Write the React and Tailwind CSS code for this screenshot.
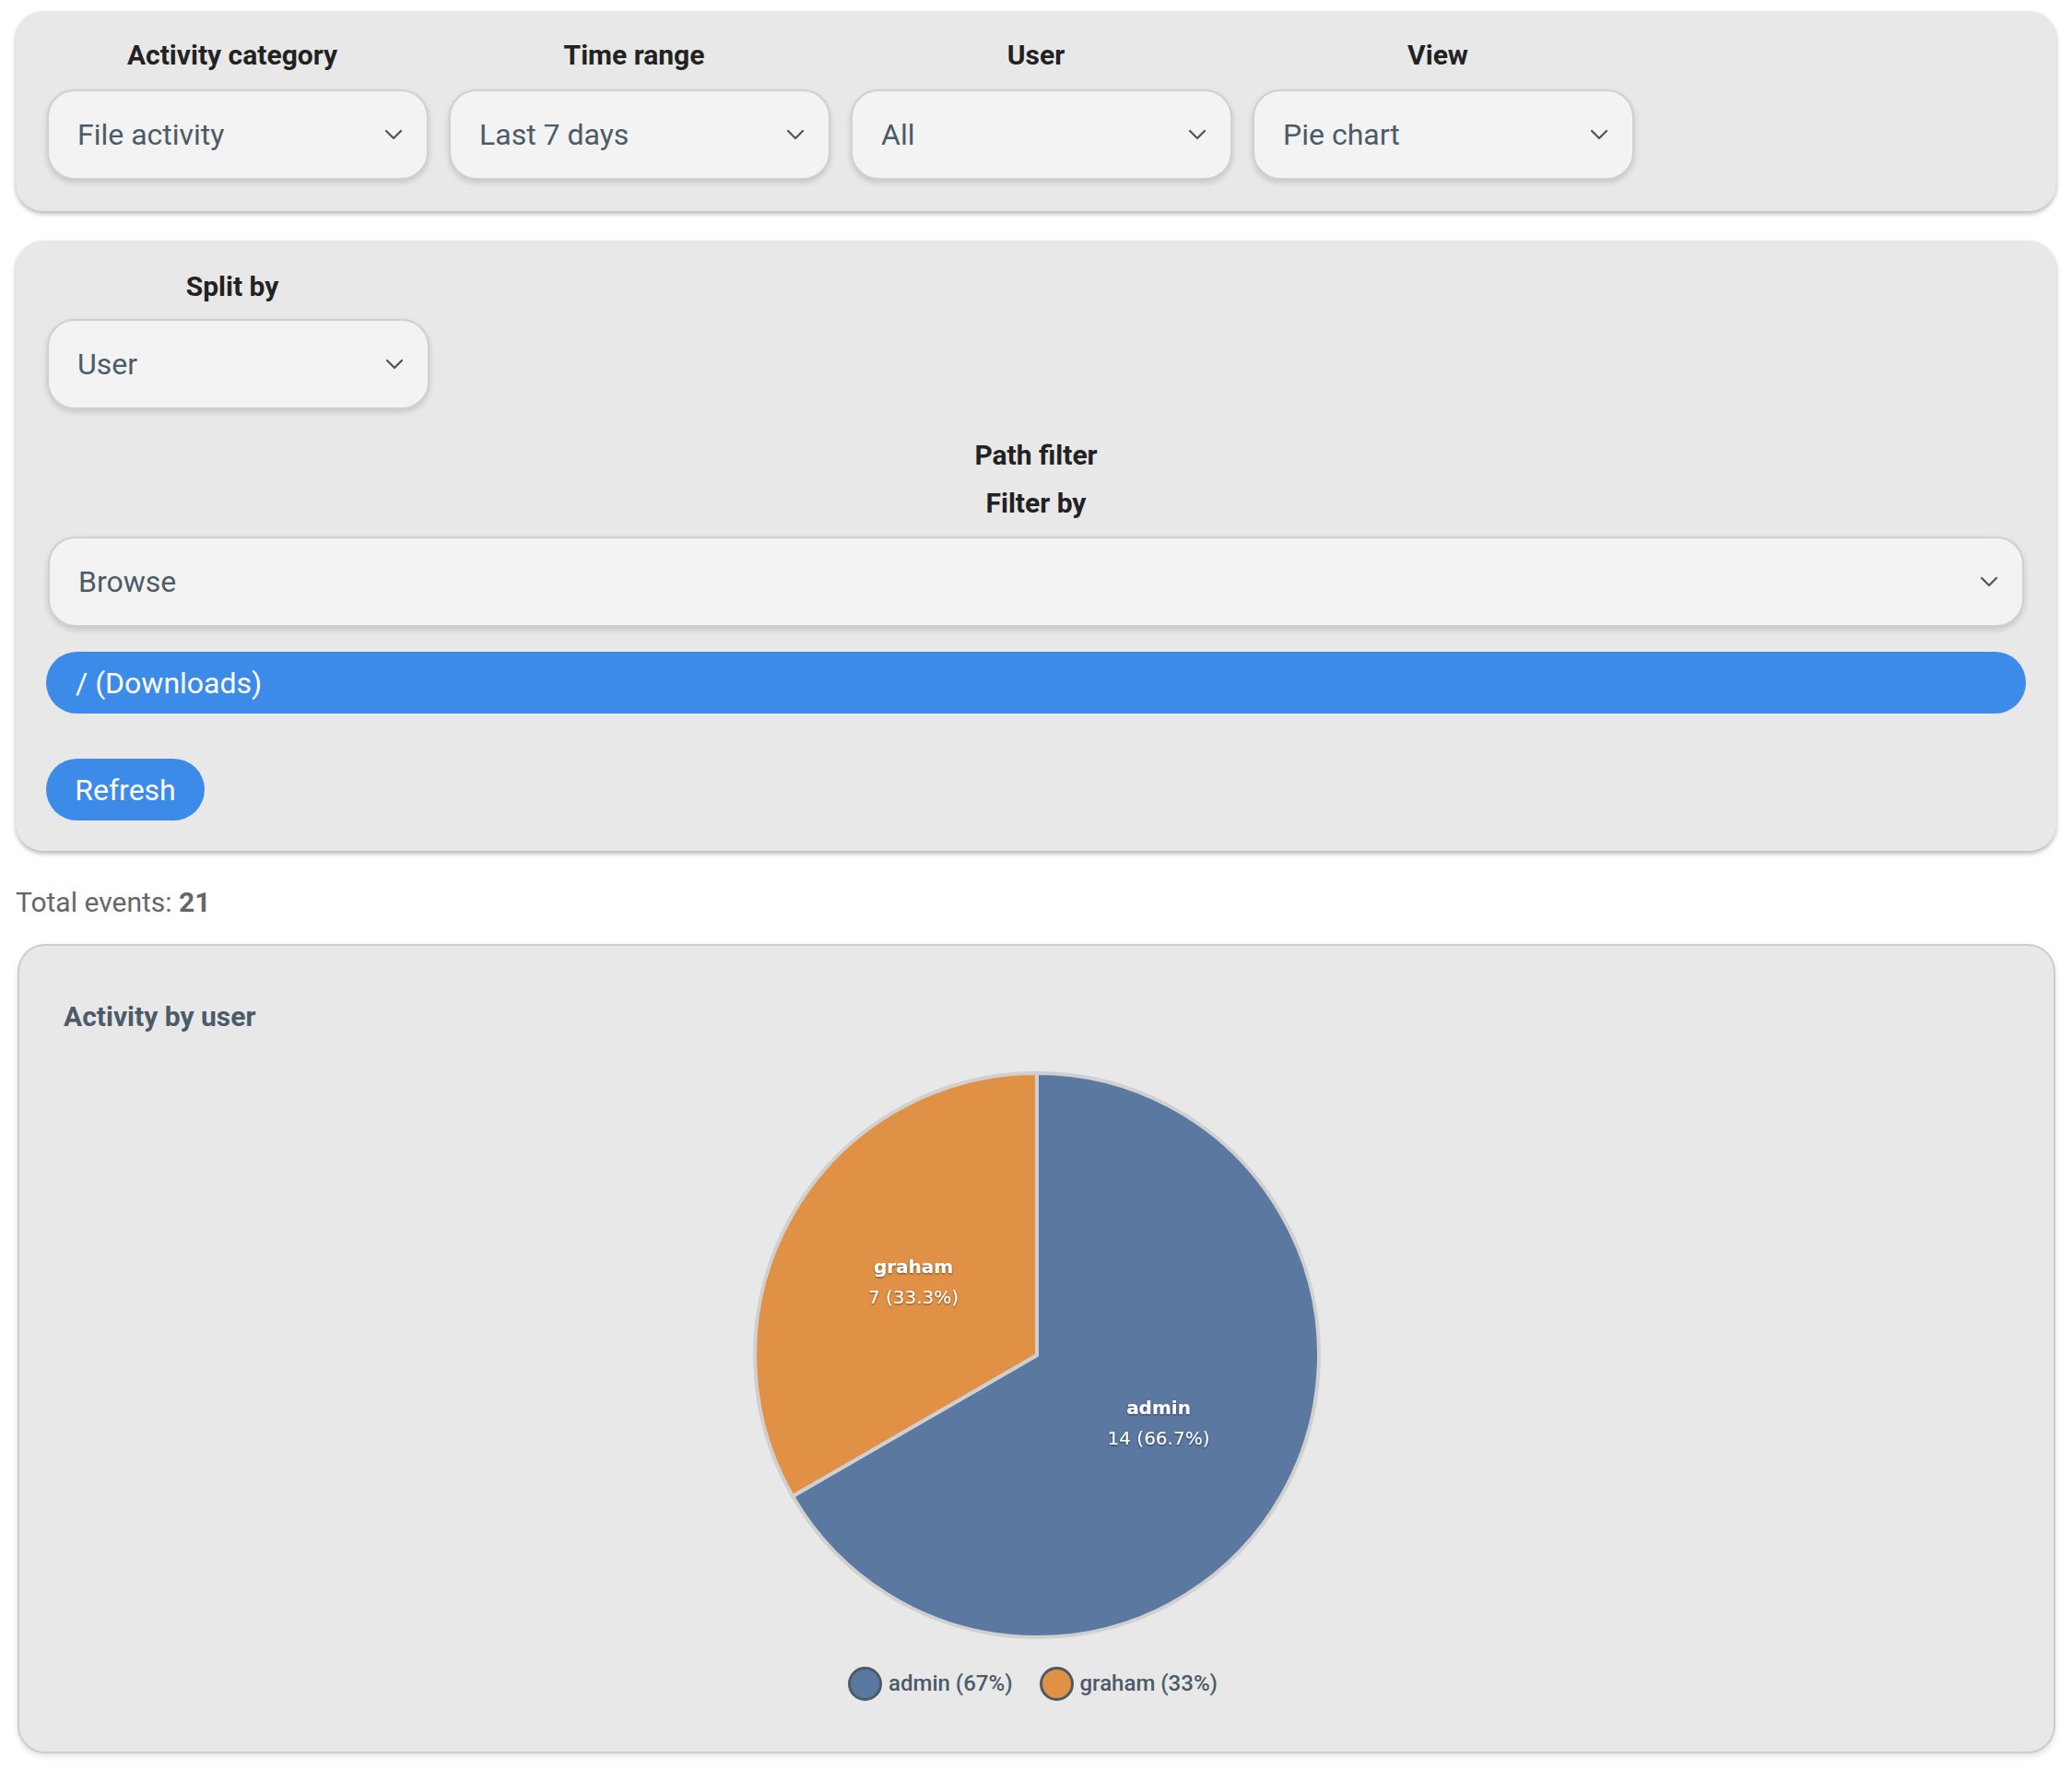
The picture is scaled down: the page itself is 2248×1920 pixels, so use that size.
import { ChevronDown } from "lucide-react";

const filters = [
  { label: "Activity category", value: "File activity" },
  { label: "Time range", value: "Last 7 days" },
  { label: "User", value: "All" },
  { label: "View", value: "Pie chart" },
];

const slices = [
  { name: "admin", count: 14, color: "#5b78a1" },
  { name: "graham", count: 7, color: "#e19146" },
];

function Select({ value, className = "" }) {
  return (
    <div
      className={
        "flex h-[98px] items-center justify-between rounded-[30px] border-2 border-[#d0d0d0] bg-[#f3f3f3] pl-[31px] pr-[20px] text-[32px] text-[#4b5b68] shadow-[0_3px_6px_rgba(0,0,0,0.15)] " +
        className
      }
    >
      <span>{value}</span>
      <ChevronDown size={32} strokeWidth={1.7} className="text-[#555]" />
    </div>
  );
}

function Label({ children, className = "pr-[12px]" }) {
  return (
    <div className={"text-center text-[30px] font-bold leading-[40px] text-[#222] " + className}>
      {children}
    </div>
  );
}

function PieChart() {
  const cx = 320;
  const cy = 320;
  const r = 306;
  const total = slices.reduce((s, x) => s + x.count, 0);
  const adminAngle = (slices[0].count / total) * Math.PI * 2;
  const ex = cx + r * Math.sin(adminAngle);
  const ey = cy - r * Math.cos(adminAngle);

  return (
    <svg width="640" height="640" viewBox="0 0 640 640">
      <defs>
        <filter id="ts" x="-20%" y="-50%" width="140%" height="200%">
          <feDropShadow dx="0" dy="1" stdDeviation="1.2" floodColor="#000" floodOpacity="0.55" />
        </filter>
      </defs>
      <path
        d={`M${cx} ${cy} L${cx} ${cy - r} A${r} ${r} 0 1 1 ${ex} ${ey} Z`}
        fill={slices[0].color}
        stroke="#d0d0d0"
        strokeWidth="4"
        strokeLinejoin="round"
      />
      <path
        d={`M${cx} ${cy} L${cx} ${cy - r} A${r} ${r} 0 0 0 ${ex} ${ey} Z`}
        fill={slices[1].color}
        stroke="#d0d0d0"
        strokeWidth="4"
        strokeLinejoin="round"
      />
      <g
        filter="url(#ts)"
        fill="#fff"
        textAnchor="middle"
        fontFamily="'DejaVu Sans', sans-serif"
        fontSize="20"
      >
        <text x="186" y="231" fontWeight="bold">graham</text>
        <text x="186" y="264">7 (33.3%)</text>
        <text x="452" y="384" fontWeight="bold">admin</text>
        <text x="452" y="417">14 (66.7%)</text>
      </g>
    </svg>
  );
}

export default function App() {
  return (
    <div className="min-h-[1920px] bg-white pt-[12px] font-['Roboto',sans-serif]">
      <div className="mx-[17px] flex gap-[22px] rounded-[30px] bg-[#e8e8e8] px-[34px] pb-[34px] pt-[28px] shadow-[0_3px_5px_rgba(0,0,0,0.28)]">
        {filters.map((f) => (
          <div key={f.label} className="flex w-[414px] flex-col gap-[17px]">
            <Label>{f.label}</Label>
            <Select value={f.value} />
          </div>
        ))}
      </div>

      <div className="mx-[17px] mt-[32px] flex flex-col rounded-[30px] bg-[#e8e8e8] px-[33px] pb-[33px] pt-[30px] shadow-[0_3px_5px_rgba(0,0,0,0.28)]">
        <div className="flex w-[416px] flex-col gap-[15px]">
          <Label>Split by</Label>
          <Select value="User" className="ml-[1px]" />
        </div>
        <div className="mt-[30px]">
          <Label className="">Path filter</Label>
        </div>
        <div className="mt-[12px]">
          <Label className="">Filter by</Label>
        </div>
        <Select value="Browse" className="mx-[2px] mt-[16px]" />
        <div className="mt-[27px] flex h-[67px] items-center rounded-full bg-[#3d8be9] pl-[32px] text-[32px] text-white">
          / (Downloads)
        </div>
        <div className="mt-[49px] flex h-[67px] w-[172px] items-center justify-center rounded-full bg-[#3d8be9] text-[32px] text-white">
          Refresh
        </div>
      </div>

      <div className="mx-[17px] mt-[36px] text-[30px] leading-[40px] text-[#666]">
        Total events: <span className="font-bold">21</span>
      </div>

      <div className="ml-[19px] mr-[18px] mt-[25px] rounded-[30px] border-2 border-[#cdcdcd] bg-[#e8e8e8] pb-[54px] pl-[48px] pt-[57px] shadow-[0_3px_6px_rgba(0,0,0,0.12)]">
        <div className="text-[30px] font-bold leading-[40px] text-[#4b5b69]">
          Activity by user
        </div>
        <div className="-ml-[48px] mt-[27px] flex justify-center">
          <PieChart />
        </div>
        <div className="-ml-[48px] mt-[16px] flex h-[40px] items-center justify-center gap-[29px] pr-[8px]">
          {slices.map((s) => (
            <div key={s.name} className="flex items-center gap-[7px]">
              <span
                className="h-[37px] w-[37px] rounded-full border-[3px] border-[#4b5b68]"
                style={{ backgroundColor: s.color }}
              />
              <span className="text-[24px] font-medium text-[#4b5b69]">
                {s.name} ({Math.round((s.count / 21) * 100)}%)
              </span>
            </div>
          ))}
        </div>
      </div>
    </div>
  );
}
